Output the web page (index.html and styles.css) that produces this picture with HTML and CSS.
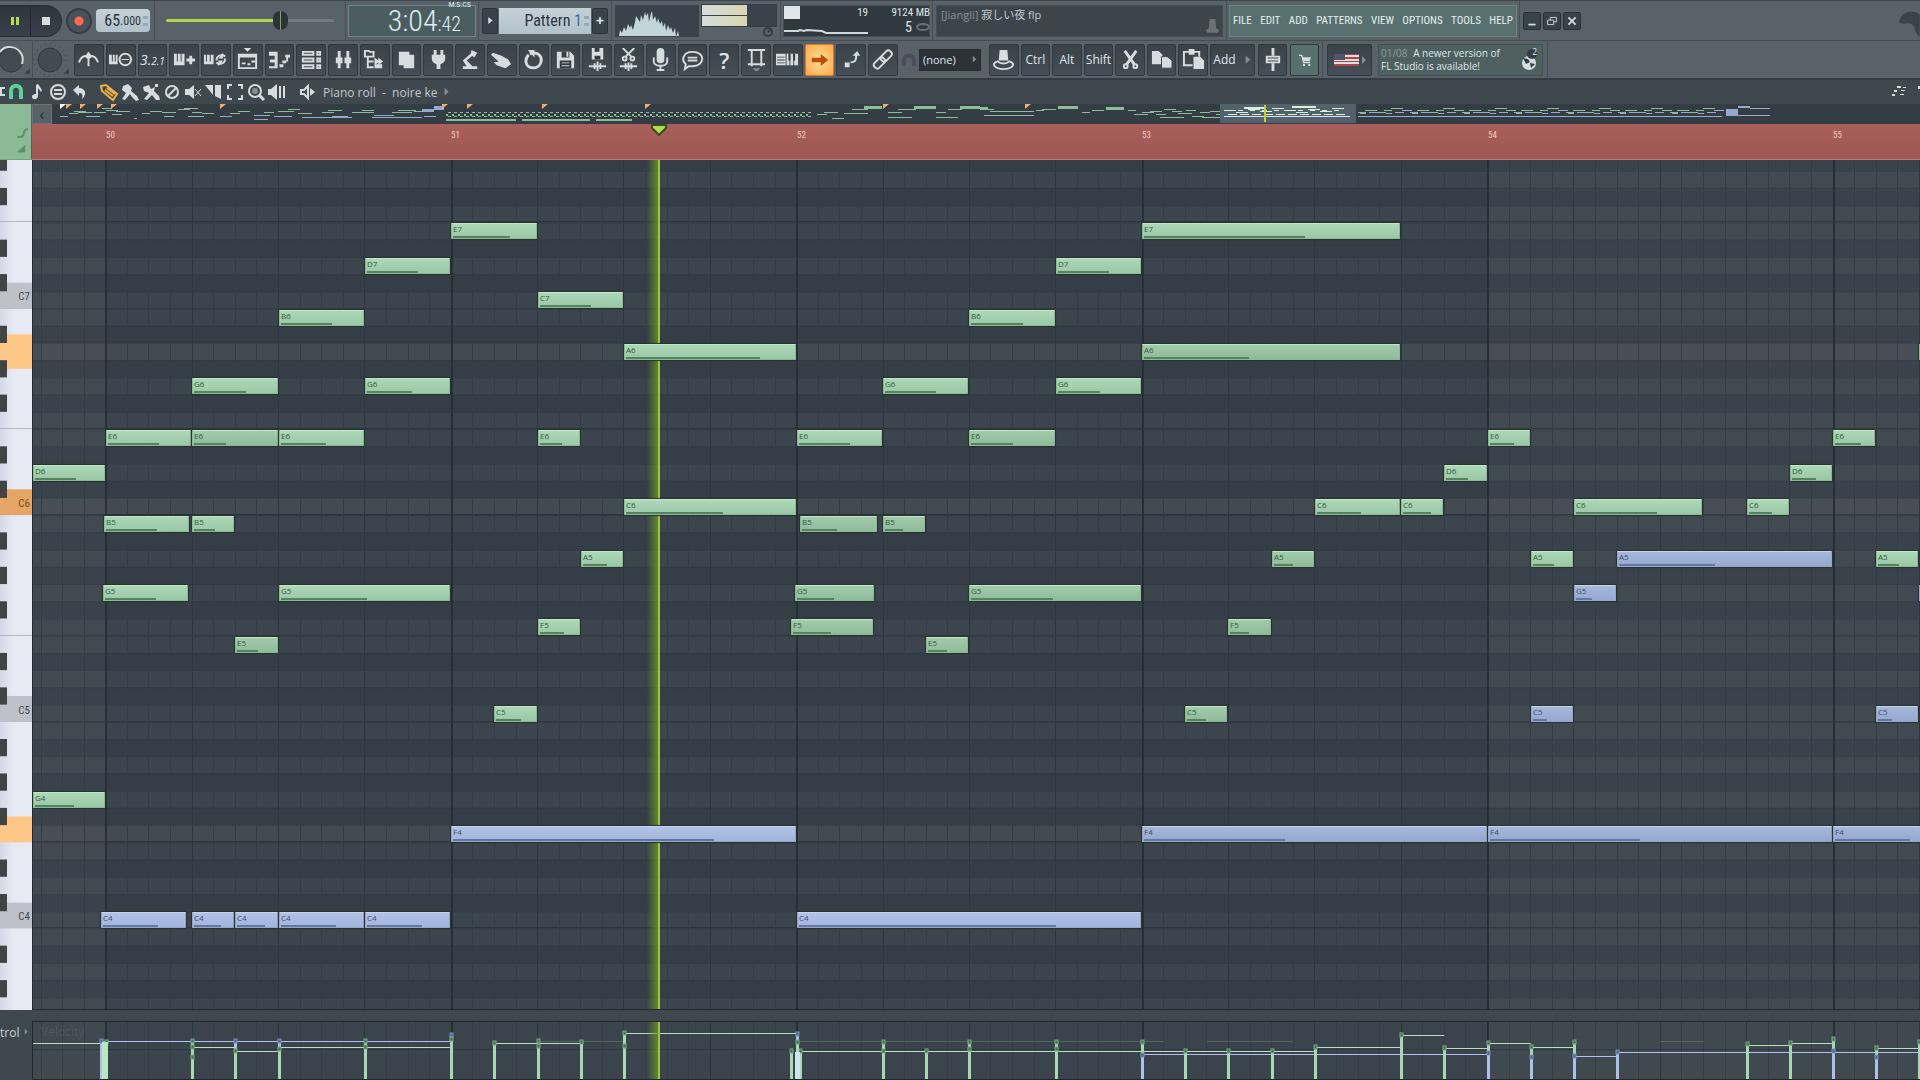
FILE: index.html
```html
<!DOCTYPE html>
<html lang="en">
<head>
<meta charset="UTF-8">
<meta name="viewport" content="width=device-width, initial-scale=1.0">
<title>Piano roll - noire ke</title>
<link rel="stylesheet" href="styles.css">
</head>
<body>
<header>
    <div class="bar top-bar">
        <div class="group transport-group">
            <div class="transport">
                <button aria-label="Pause"><svg viewBox="0 0 24 24"><path class="lime" d="M8 8h3v8H8zM13 8h3v8h-3z"/></svg></button>
                <button aria-label="Stop"><svg viewBox="0 0 24 24"><path d="M8 8h8v8H8z"/></svg></button>
            </div>
            <button class="record" aria-label="Record"></button>
            <label class="lcd tempo"><input type="text" value="65" aria-label="Tempo"><small>.000</small><i class="spin"></i></label>
        </div>
        <div class="group slider-group"><input type="range" min="0" max="100" value="70" aria-label="Song position"></div>
        <div class="group"><div class="screen time"><b>3:04</b><span><small>M:S:CS</small>:42</span></div></div>
        <div class="group pattern-group">
            <button class="slim" aria-label="Pattern menu"><svg viewBox="0 0 16 24"><path d="M6 8l5 4-5 4z"/></svg></button>
            <button class="lcd pattern">Pattern <em>1</em><i class="spin"></i></button>
            <button class="slim" aria-label="Add pattern"><svg viewBox="0 0 16 24"><path class="line" d="M4 12h8M8 8v8"/></svg></button>
        </div>
        <div class="group scope-group">
            <svg class="spectrum" viewBox="0 0 84 32"><path d="M4 31l1-6 2 3 2-6 2 4 2-7 2 4 1-3 2 5 2-8 1-6 2 3 2 3 1-7 2 5 2-8 1 4 2-3 1 9 2-9 1-2 1 9 2-4 2 7 1-5 2 6 2-3 1 6 2-4 1 8 2-6 2 5 1-3 2 6 2-5 1 9 2-6 1 5h-2z"/></svg>
            <div class="scope-side">
                <div class="meter"><i></i><i></i></div>
                <svg viewBox="0 0 12 10"><circle cx="6" cy="5" r="4"/><path d="M6 5l3-3"/></svg>
            </div>
        </div>
        <div class="group">
            <div class="screen cpu">
                <i></i><span>19</span><span>9124 MB</span>
                <svg viewBox="0 0 84 16"><path d="M0 12h14l2-1 4 1 3-1 15 1 4 2h42"/></svg><span class="voices">5<svg viewBox="0 0 14 10"><ellipse cx="7" cy="5" rx="6" ry="3"/></svg></span>
            </div>
        </div>
        <div class="group hint-group">
            <div class="screen hint"><span>[Jiangli]</span> 寂しい夜 flp<svg viewBox="0 0 14 16"><path d="M4 1h6l1 10 3 2-1 3H1l-1-3 3-2z"/></svg></div>
        </div>
        <div class="group">
            <nav class="menu">
                <a href="#">FILE</a><a href="#">EDIT</a><a href="#">ADD</a><a href="#">PATTERNS</a><a href="#">VIEW</a><a href="#">OPTIONS</a><a href="#">TOOLS</a><a href="#">HELP</a>
            </nav>
        </div>
        <div class="window-buttons">
            <button aria-label="Minimize"><svg viewBox="0 0 18 18"><path class="line" d="M5 13h8"/></svg></button>
            <button aria-label="Restore"><svg viewBox="0 0 18 18"><path class="line thin" d="M7 8V5h7v5h-3M4 8h7v5H4z"/></svg></button>
            <button aria-label="Close"><svg viewBox="0 0 18 18"><path class="line" d="M5 5l8 8M13 5l-8 8"/></svg></button>
        </div>
        <svg class="logo" viewBox="0 0 22 40"><path d="M1 22c0-6 6-12 14-11 3 0 5 1 7 3v23c-5-3-4-9-7-12-3-4-9 0-14-3z"/></svg>
    </div>

    <div class="bar tool-bar">
        <div class="group knob-group"><svg viewBox="0 0 32 38"><circle cx="11" cy="19" r="12" class="knob"/><path class="line" d="M0 11c5-8 18-6 22 3 1 3 1 6 0 9"/><path class="corner" d="M24 33l6-6v6z"/></svg></div>
        <div class="knob-group wide"><svg viewBox="0 0 41 38"><circle cx="17" cy="19" r="16" class="ticks"/><circle cx="17" cy="19" r="12" class="knob"/><path class="corner" d="M30 33l6-6v6z"/></svg></div>
        <div class="tools">
            <button aria-label="Metronome"><svg viewBox="0 0 24 24"><path class="line" d="M2 15c2-6 5-7 10-7s8 1 10 7M12 5v14"/><path d="M12 4l4 5-4 3-4-3z"/></svg></button>
            <button aria-label="Wait for input"><svg viewBox="0 0 24 24"><path d="M0 7h3v7h1V7h2v7h1V7h2v10H0z"/><circle class="line" cx="17" cy="12" r="6"/><path class="line thin" d="M13 12h8"/></svg></button>
            <button aria-label="Countdown"><span>3.<small>2.1</small></span></button>
            <button aria-label="Blend recording"><svg viewBox="0 0 24 24"><path d="M1 6h3v8h1V6h3v8h1V6h3v12H1zM14 11h3V8h3v3h3v3h-3v3h-3v-3h-3z"/></svg></button>
            <button aria-label="Loop recording"><svg viewBox="0 0 24 24"><path d="M0 7h2v7h1V7h3v7h1V7h3v10H0z"/><path class="line" d="M13 13c0-6 7-7 9-4M22 11c0 6-7 7-9 4"/><path d="M20 5v6h-5zM15 19v-6h5z"/></svg></button>
            <button aria-label="Playlist"><svg viewBox="0 0 24 24"><path d="M8 0h8l-4 4z"/><path class="line" d="M3 7h18v14H3z"/><path d="M3 7h18v3H3zM6 15h4v2H6zM12 16h3v2h-3zM16 13h4v2h-4z"/></svg></button>
            <button aria-label="Piano roll"><svg viewBox="0 0 24 24"><path d="M1 4h9v17H1v-2h6v-4H2v-3h5V8H1zM12 17h4v3h-4zM15 13h4v3h-4zM18 7h5v3h-5zM19 10h2v4h-2z"/></svg></button>
            <button aria-label="Channel rack"><svg viewBox="0 0 24 24"><path class="line" d="M3 4h11v3H3zM3 11h11v3H3zM3 18h11v3H3zM18 4h3v3h-3zM18 11h3v3h-3zM18 18h3v3h-3z"/></svg></button>
            <button aria-label="Mixer"><svg viewBox="0 0 24 24"><path d="M6 3h3v18H6zM15 3h3v18h-3zM4 10h7v6H4zM13 10h7v6h-7z"/></svg></button>
            <button aria-label="Browser"><svg viewBox="0 0 24 24"><path class="line" d="M2 3h4l1 1h4v5H2zM5 10v10h6M5 14h6"/><path d="M12 10l4 3V10l5 4-5 4v-3l-4 3zM12 17h8v4h-8z"/></svg></button>
            <button aria-label="Plugin"><svg viewBox="0 0 24 24"><path d="M4 4h11v3h5v14H9v-3H4z"/></svg></button>
            <button aria-label="Plug"><svg viewBox="0 0 24 24"><path d="M7 2h3v5h4V2h3v5h2v4c0 4-3 5-5 6v5h-4v-5c-2-1-5-2-5-6V7h2z"/></svg></button>
            <button aria-label="Tempo tapper"><svg viewBox="0 0 24 24"><path d="M13 2l6 3-3 5-4-3zM12 6l2 2-6 5 6 6h5v3H4v-3h4l-4-6z"/></svg></button>
            <button aria-label="Touch"><svg viewBox="0 0 24 24"><path d="M3 5l9 3 7 4 3 5-6 4-9-3-3-3 5-1-8-7z"/></svg></button>
            <button aria-label="Undo"><svg viewBox="0 0 24 24"><path class="line heavy" d="M8 6c9-3 13 3 12 8-2 9-15 9-16 0 0-3 1-5 3-7"/><path d="M6 2h7v8z"/></svg></button>
            <button aria-label="Save"><svg viewBox="0 0 24 24"><path d="M3 4h14l4 4v13H3z"/><path class="hole" d="M8 4h8v6H8zM6 13h12v8H6z"/><path d="M13 4h2v5h-2zM8 15h8v1H8zM8 18h8v1H8z"/></svg></button>
            <button aria-label="Save new version"><svg viewBox="0 0 24 24"><path d="M6 0h12v12H6z"/><path class="hole" d="M9 0h5v4H9zM9 8h6v4H9z"/><path class="line" d="M3 19h18M9 16v6M12 14v10M15 16v6"/></svg></button>
            <button aria-label="Render"><svg viewBox="0 0 24 24"><path class="line" d="M6 0l9 9M18 0L9 9"/><circle class="line" cx="8" cy="11" r="2"/><circle class="line" cx="16" cy="11" r="2"/><path class="line" d="M3 19h18M9 16v6M12 15v9M15 16v6"/></svg></button>
            <button aria-label="Record audio"><svg viewBox="0 0 24 24"><rect x="8" y="0" width="8" height="16" rx="4"/><path class="line" d="M5 10v4c0 6 14 6 14 0v-4M12 18v5M8 23h8"/></svg></button>
            <button aria-label="Chat"><svg viewBox="0 0 24 24"><path class="line" d="M12 4c14 0 13 15 0 15-2 0-3 0-4 0l-4 3 1-5C0 13 2 4 12 4zM7 10h10M7 13h10"/></svg></button>
            <button aria-label="Help"><span class="big">?</span></button>
            <button aria-label="Film"><svg viewBox="0 0 24 24"><path class="line" d="M7 1v18M17 1v18M3 2h18M3 17h18"/><path class="dim" d="M8 21h8l-4 4z"/></svg></button>
            <button aria-label="Typing keyboard"><svg viewBox="0 0 24 24"><path d="M0 6h10v12H0zM11 6h3v12h-3zM15 6h3v12h-3zM19 6h4v12h-4z"/><path class="hole" d="M1 9h8v1H1zM1 12h8v1H1zM1 15h8v1H1zM13 6h2v7h-2zM18 6h2v7h-2z"/></svg></button>
            <button class="active" aria-label="Step edit"><svg viewBox="0 0 24 24"><path d="M1 9h12V4l10 8-10 8v-5H1z"/></svg></button>
            <button aria-label="Note glide"><svg viewBox="0 0 24 24"><path class="line" d="M11 15c5 0 6-2 6-8"/><path d="M13 8l5-5 3 5zM5 15h5v5H5z"/></svg></button>
            <button aria-label="Link"><svg viewBox="0 0 24 24"><g class="line" transform="rotate(-45 12 12)"><rect x="0" y="8" width="13" height="7" rx="3"/><rect x="10" y="8" width="13" height="7" rx="3"/></g></svg></button>
        </div>
        <svg class="snap" viewBox="0 0 21 24"><path d="M6 18v-6c0-6 10-6 10 0v6"/></svg>
        <label class="snap-box"><select aria-label="Snap"><option>(none)</option></select><svg viewBox="0 0 6 10"><path class="dim" d="M1 1l4 4-4 4z"/></svg></label>
        <div class="tools edit-tools">
            <button aria-label="Hat"><svg viewBox="0 0 24 24"><path d="M8 2h8l1 11H7z"/><path class="line" d="M6 14c-8 2-3 8 6 8s14-6 6-8c-3 3-9 3-12 0z"/></svg></button>
            <button>Ctrl</button>
            <button>Alt</button>
            <button>Shift</button>
            <button aria-label="Cut"><svg viewBox="0 0 24 24"><path class="line heavy" d="M6 3l10 14M18 3L8 17"/><circle class="line" cx="7" cy="19" r="2"/><circle class="line" cx="17" cy="19" r="2"/></svg></button>
            <button aria-label="Copy"><svg viewBox="0 0 24 24"><path d="M2 3h7l4 4v10H2z"/><path d="M12 9h6l5 4v8H12z" class="front"/></svg></button>
            <button aria-label="Paste"><svg viewBox="0 0 24 24"><path class="line" d="M11 18H2V4h16v5"/><path d="M7 1h6v6H7zM12 9h7l4 4v9H12z"/></svg></button>
        </div>
        <div class="tool-tail">
            <button class="add">Add<svg viewBox="0 0 10 12"><path class="dim" d="M2 1l6 5-6 5z"/></svg></button>
            <button aria-label="Fader"><svg viewBox="0 0 24 24"><path d="M11 0h3v8h-3zM11 16h3v8h-3z"/><path class="line" d="M6 9h13v6H6zM6 12h13"/></svg></button>
            <button class="shop" aria-label="Shop"><svg viewBox="0 0 24 24"><path class="line" d="M3 5h4l3 11h10"/><path d="M8 8h13l-2 6H10zM9 18h3v3H9zM17 18h3v3h-3z"/></svg></button>
        </div>
        <div class="news-group">
            <button aria-label="Language"><svg class="flag" viewBox="0 0 32 14"><path class="white" d="M0 1h25v12H0z"/><path class="red" d="M0 1h25v1H0zM0 4h25v2H0zM0 8h25v1H0zM0 11h25v2H0z"/><path class="navy" d="M0 1h11v6H0z"/><path class="dim" d="M28 3l4 4-4 4z"/></svg></button>
            <div class="news"><p><time>01/08</time> A newer version of<br>FL Studio is available!</p><svg viewBox="0 0 20 24"><circle cx="9" cy="15" r="7"/><path class="hole" d="M3 10l5 1 2 3-4 2zM10 15l5 1-4 4z"/><circle class="hole" cx="12" cy="6" r="5"/></svg><sup>2</sup></div>
        </div>
    </div>

    <div class="bar roll-bar">
        <div class="roll-tools">
            <button aria-label="Options"><svg viewBox="0 0 20 20"><path class="line" d="M20 6h-4v7h4"/></svg></button>
            <button aria-label="Snap"><svg viewBox="0 0 20 20"><path class="magnet" d="M5 17V9c0-7 10-7 10 0v8"/></svg></button>
            <button aria-label="Stamp"><svg viewBox="0 0 20 20"><path d="M9 3l2-1 4 6-1 2-3-4v8c0 4-6 4-6 1s3-3 4-3z"/></svg></button>
            <button aria-label="Quantize"><svg viewBox="0 0 20 20"><circle class="line" cx="10" cy="10" r="7"/><path class="line" d="M6 8h8M6 12h8"/></svg></button>
            <button aria-label="Undo"><svg viewBox="0 0 20 20"><path d="M4 8l6-5v3c7 0 8 7 3 11 1-5 0-6-3-6v3z"/></svg></button>
        </div>
        <div class="roll-tools">
            <button aria-label="Draw"><svg viewBox="0 0 20 20"><path class="gold" d="M2 4l5-1 11 9-4 6-11-9zM6 8l8 6M8 6l8 6"/></svg></button>
            <button aria-label="Paint"><svg viewBox="0 0 20 20"><path d="M3 4l5-2 4 4-1 3 6 5 2 4-3 1-4-4-2-3-5 6-3-1 4-6-4-3z"/></svg></button>
            <button aria-label="Paint drums"><svg viewBox="0 0 20 20"><path d="M2 5l6-2 2 4 4-2-1 4 5 5 1 4-4 0-4-5-5 5-3-1 5-6-5-2zM14 2h3v3h-3z"/></svg></button>
            <button aria-label="Delete"><svg viewBox="0 0 20 20"><circle class="line" cx="10" cy="10" r="6"/><path class="line" d="M6 14l8-8"/></svg></button>
            <button aria-label="Mute"><svg viewBox="0 0 20 20"><path d="M2 7h4l5-4v14l-5-4H2z"/><path class="line thin" d="M12 7l6 7M18 7l-6 7"/></svg></button>
            <button aria-label="Slice"><svg viewBox="0 0 20 20"><path d="M1 3h8v10zM11 3h6v14l-6-3z"/></svg></button>
            <button aria-label="Select"><svg viewBox="0 0 20 20"><path class="line" d="M3 7V3h4M13 3h4v4M17 13v4h-4M7 17H3v-4"/></svg></button>
            <button aria-label="Zoom"><svg viewBox="0 0 20 20"><circle class="line" cx="9" cy="9" r="6"/><circle class="dim" cx="9" cy="9" r="3"/><path class="line heavy" d="M13 13l5 5"/></svg></button>
            <button aria-label="Playback"><svg viewBox="0 0 20 20"><path d="M1 7h3l6-5v16l-6-5H1zM12 4h2v12h-2zM16 4h2v12h-2z"/></svg></button>
        </div>
        <button class="target"><svg viewBox="0 0 20 20"><path class="line" d="M3 8h3l4-4v12l-4-4H3z"/><path d="M12 6l5 4-5 4z"/></svg>Piano roll&nbsp; - &nbsp;noire ke<svg class="arrow" viewBox="0 0 10 12"><path class="dim" d="M2 1l5 5-5 5z"/></svg></button>
        <svg class="roll-right" viewBox="0 0 30 20"><path d="M7 4h4v2H7zM13 5h3v1h-3zM4 8h3v2H4zM11 8h4v1h-4zM2 12h3v2H2zM10 12h4v1h-4zM28 4h2v3h-2z"/></svg>
    </div>
</header>

<main class="roll">
    <div class="corner-box"><svg viewBox="0 0 32 56"><path class="curve" d="M18 34h4c4 0 1-8 6-8h1"/><path d="M17 50l9-8v8z"/></svg></div>
    <div class="timeline">
        <div class="overview"><button aria-label="Scroll left">‹</button><svg id="overview"></svg></div>
        <div class="ruler" id="ruler"></div>
    </div>
    <svg class="keys" id="keys"></svg>
    <div class="grid-area">
        <svg id="grid"></svg>
        <div class="playhead"></div>
        <div id="notes"></div>
    </div>
    <div class="splitter"></div>
    <div class="control-label">trol <svg viewBox="0 0 6 10"><path class="dim" d="M1 1l4 4-4 4z"/></svg></div>
    <div class="velocity">
        <svg id="velocity"></svg>
        <span>Velocity</span>
        <div class="playhead"></div>
    </div>
</main>
<script src="script.js"></script>
</body>
</html>
```
FILE: styles.css
```css
* {
    box-sizing: border-box;
}
body {
    margin: 0;
    height: 100vh;
    display: flex;
    flex-direction: column;
    overflow: hidden;
    background: #3f484f;
    color: #dfe6ea;
    font-family: "Open Sans", "Noto Sans CJK JP", sans-serif;
    font-size: 12px;
}
button, input, select {
    font: inherit;
    color: inherit;
    border: 0;
    margin: 0;
    padding: 0;
    background: none;
}
svg {
    display: block;
    fill: #d5dde1;
}
.line {
    fill: none;
    stroke: #d5dde1;
    stroke-width: 2;
}
.thin {
    stroke-width: 1;
}
.heavy {
    stroke-width: 3;
}
.hole {
    fill: #343d44;
}
.dim {
    fill: #848d93;
}
.lime {
    fill: #b4dc4c;
}

/* toolbars */
.bar {
    display: flex;
    align-items: center;
    background: #5a6269;
}
.top-bar {
    height: 41px;
    border-top: 1px solid #3d464d;
    border-bottom: 1px solid #444d54;
}
.tool-bar {
    height: 39px;
    border-bottom: 2px solid #333c43;
}
.group {
    display: flex;
    align-items: center;
    height: 100%;
    padding: 0 2px;
    border-right: 1px solid #474f56;
}
.transport-group {
    gap: 4px;
    padding: 0 4px 0 0;
}
.transport {
    display: flex;
    width: 62px;
    height: 32px;
    border-radius: 0 16px 16px 0;
    background: linear-gradient(#2d363d, #39424a);
    border: 1px solid #272f35;
    border-left: 0;
}
.transport button {
    flex: 1;
    border-right: 1px solid #232b31;
}
.transport button + button {
    border: 0;
}
.transport svg {
    width: 24px;
    margin: auto;
}
.record {
    width: 26px;
    height: 26px;
    border-radius: 50%;
    border: 2px solid #343c43;
    background: radial-gradient(circle, #ff6b4e 4px, #4a5259 5px);
}
.lcd {
    display: flex;
    align-items: center;
    justify-content: flex-end;
    background: linear-gradient(#c3d1d8, #b2c2ca);
    color: #2c353c;
    font-family: "Roboto Condensed", Roboto, sans-serif;
    font-size: 16px;
}
.tempo {
    width: 54px;
    height: 23px;
    border-radius: 4px;
    padding-right: 2px;
}
.tempo input {
    width: 20px;
    text-align: right;
}
.tempo small {
    font-size: 12px;
}
.spin {
    width: 5px;
    height: 10px;
    margin-left: 2px;
    border-top: 3px solid #9aaab5;
    border-bottom: 3px solid #9aaab5;
}
.slider-group {
    padding: 0 11px;
}
input[type="range"] {
    appearance: none;
    width: 168px;
    height: 20px;
}
input[type="range"]::-webkit-slider-runnable-track {
    height: 3px;
    border-radius: 2px;
    background: linear-gradient(90deg, #acd451 70%, #737b81 70%);
}
input[type="range"]::-webkit-slider-thumb {
    appearance: none;
    width: 15px;
    height: 19px;
    margin-top: -8px;
    border-radius: 8px;
    background: linear-gradient(90deg, #2b3338 46%, #8aa83f 46%, #8aa83f 56%, #2b3338 56%);
}
.screen {
    height: 32px;
    background: #3c454c;
    border: 1px solid #454e55;
}
.time {
    display: flex;
    align-items: center;
    justify-content: flex-end;
    width: 128px;
    padding-right: 14px;
    background: #4b5d61;
    border-color: #71838a;
    color: #deedf0;
    font-family: "Roboto Condensed", Roboto, sans-serif;
    font-size: 30px;
    line-height: 30px;
}
.time b {
    font-weight: 300;
}
.time span {
    position: relative;
    font-size: 20px;
    font-weight: 300;
    padding-top: 6px;
}
.time small {
    position: absolute;
    right: -10px;
    top: -3px;
    font-size: 8px;
    font-weight: 400;
    line-height: 10px;
}
.pattern-group {
    gap: 1px;
    padding: 0 3px;
}
.slim {
    width: 16px;
    height: 26px;
    background: #39424a;
    border: 1px solid #2b343b;
    border-radius: 2px;
}
.slim svg {
    width: 14px;
}
.pattern {
    width: 92px;
    height: 26px;
    padding-right: 2px;
    white-space: pre;
}
.pattern em {
    font-style: normal;
    color: #3e66a5;
}
.scope-group {
    gap: 2px;
    padding: 0 3px;
}
.spectrum {
    width: 84px;
    height: 32px;
    background: #3a434b;
    fill: #c4d5d9;
}
.meter {
    width: 76px;
    height: 23px;
    background: #3a434b;
    border: 1px solid #343d44;
}
.meter i {
    display: block;
    width: 45px;
    height: 10px;
    margin-bottom: 1px;
    background: linear-gradient(90deg, #d6dcdc, #dad5b1);
}
.scope-side svg {
    width: 12px;
    margin: 0 3px 0 auto;
    fill: none;
    stroke: #353e45;
    stroke-width: 2;
}
.cpu {
    display: grid;
    grid-template-columns: 16px 1fr 62px;
    grid-template-rows: 13px 17px;
    width: 147px;
    background: #30393f;
    font-family: "Roboto Condensed", Roboto, sans-serif;
    font-size: 11px;
    line-height: 14px;
    text-align: right;
}
.cpu i {
    background: #dfe5e8;
}
.cpu svg {
    grid-column: 1 / 3;
    width: 84px;
    height: 16px;
    fill: none;
    stroke: #cfd8dc;
    stroke-width: 2;
}
.cpu .voices {
    display: flex;
    align-items: center;
    justify-content: flex-end;
    gap: 4px;
    font-size: 14px;
}
.cpu .voices svg {
    width: 14px;
    height: 10px;
    stroke: #69727a;
}
.hint-group {
    padding: 0 3px;
}
.hint {
    position: relative;
    width: 287px;
    padding: 0 4px;
    font-size: 11px;
    line-height: 18px;
    color: #c3cacd;
}
.hint span {
    color: #8a9297;
}
.hint svg {
    position: absolute;
    right: 3px;
    bottom: 3px;
    width: 13px;
    fill: #6a7278;
}
.menu {
    display: flex;
    align-items: center;
    justify-content: space-between;
    width: 288px;
    height: 32px;
    padding: 0 3px;
    background: #58706f;
    border: 1px solid #6c8283;
    font-family: "Roboto Condensed", Roboto, sans-serif;
    font-size: 11px;
}
.menu a {
    color: #e5eff0;
    text-decoration: none;
}
.window-buttons {
    display: flex;
    gap: 2px;
    margin-left: 3px;
}
.window-buttons button {
    width: 18px;
    height: 18px;
    background: #39424a;
    border: 1px solid #293238;
    border-radius: 2px;
}
.window-buttons svg {
    width: 16px;
}
.logo {
    width: 22px;
    height: 39px;
    margin-left: auto;
    fill: #3b444b;
}
.knob-group {
    width: 33px;
    padding: 0;
}
.knob-group.wide {
    width: 41px;
}
.knob-group svg {
    width: 100%;
}
.knob {
    fill: #434b52;
    stroke: #31393f;
}
.ticks {
    fill: none;
    stroke: #4a5259;
    stroke-width: 2;
    stroke-dasharray: 1 4;
}
.corner {
    fill: #3b444b;
}
.tools {
    display: grid;
    grid-template-columns: repeat(26, 1fr);
    gap: 2px;
    width: 824px;
}
.edit-tools {
    grid-template-columns: repeat(7, 1fr);
    width: 219px;
    margin-left: 8px;
}
.tools button, .tool-tail button, .news-group button {
    display: flex;
    align-items: center;
    justify-content: center;
    height: 32px;
    background: linear-gradient(#3a434a, #454e56);
    border: 1px solid #303940;
    border-radius: 2px;
}
.tools svg, .tool-tail svg {
    width: 23px;
}
.tools span {
    font-size: 14px;
    font-style: italic;
}
.tools small {
    font-size: 10px;
}
.tools .big {
    font-size: 22px;
    font-style: normal;
    font-weight: 600;
    line-height: 22px;
}
.tools .active {
    background: radial-gradient(#ffe09a, #ffa548);
    border-color: #d97b2b;
}
.tools .active svg {
    width: 18px;
    fill: #bb4f08;
}
.snap {
    width: 21px;
    fill: none;
    stroke: #484f56;
    stroke-width: 4;
}
.snap-box {
    display: flex;
    align-items: center;
    width: 62px;
    height: 22px;
    padding: 0 3px;
    background: #2c3238;
    border: 1px solid #272e33;
    font-size: 11px;
}
.snap-box select {
    appearance: none;
    flex: 1;
}
.snap-box svg {
    width: 5px;
}
.front {
    stroke: #3b444b;
}
.tool-tail {
    display: flex;
    gap: 3px;
    height: 100%;
    align-items: center;
    padding: 0 3px 0 2px;
    border-right: 1px solid #474f56;
}
.tool-tail button {
    width: 29px;
}
.tool-tail .add {
    width: 45px;
    gap: 8px;
}
.tool-tail .add svg {
    width: 8px;
}
.tool-tail .shop {
    background: #56706d;
}
.tool-tail .shop svg {
    width: 16px;
}
.news-group {
    display: flex;
    gap: 6px;
    height: 100%;
    align-items: center;
    padding: 0 4px;
    border-right: 1px solid #474f56;
}
.news-group button {
    width: 45px;
}
.flag {
    width: 32px;
}
.white {
    fill: #dedede;
}
.red {
    fill: #a9474c;
}
.navy {
    fill: #54536d;
}
.news {
    position: relative;
    display: flex;
    align-items: center;
    justify-content: space-between;
    width: 165px;
    height: 32px;
    padding: 0 2px;
    background: #4e605f;
    border: 1px solid #3f5152;
    font-size: 10px;
    line-height: 13px;
}
.news p {
    margin: 0;
    white-space: nowrap;
}
.news time {
    margin-right: 3px;
    color: #8b9b9a;
}
.news svg {
    width: 20px;
}
.news sup {
    position: absolute;
    right: 5px;
    top: 0;
}
.roll-bar {
    height: 24px;
    gap: 20px;
    background: #3f484f;
}
.roll-tools {
    display: flex;
    gap: 1px;
}
.roll-tools:first-child {
    margin-left: -15px;
}
.roll-tools svg, .target svg {
    width: 20px;
}
.roll-bar .roll-tools + .roll-tools {
    margin-left: -10px;
}
.magnet {
    fill: none;
    stroke: #5fcf9d;
    stroke-width: 4;
}
.gold {
    fill: none;
    stroke: #eeb243;
    stroke-width: 2;
}
.target {
    display: flex;
    align-items: center;
    margin-left: -9px;
    gap: 5px;
    color: #c2c9cc;
}
.target .arrow {
    width: 8px;
}
.roll-right {
    width: 30px;
    margin-left: auto;
}

/* piano roll */
.roll {
    flex: 1;
    display: grid;
    grid-template-columns: 32px 1fr;
    grid-template-rows: 56px 1fr 11px 59px;
    min-height: 0;
}
.corner-box {
    background: #8dba96;
    border-right: 1px solid #4d6552;
    border-bottom: 1px solid #78a181;
}
.corner-box path {
    fill: #638b6b;
}
.corner-box .curve {
    fill: none;
    stroke: #638b6b;
    stroke-width: 2;
}
.timeline {
    min-width: 0;
}
.overview {
    display: flex;
    height: 20px;
    background: #343d44;
}
.overview button {
    width: 20px;
    background: #596168;
    border: 1px solid #6b7379;
    color: #20282d;
    font-size: 16px;
    line-height: 14px;
}
.overview svg {
    flex: 1;
    height: 20px;
}
.ruler {
    position: relative;
    height: 36px;
    overflow: hidden;
    background: linear-gradient(#a9605c, #9d5753);
    border-bottom: 1px solid #bd7b73;
}
.ruler span {
    position: absolute;
    top: 5px;
    font-family: "Roboto Condensed", Roboto, sans-serif;
    font-size: 9px;
    line-height: 12px;
    color: #f2c9c3;
}
.marker {
    position: absolute;
    top: 0;
    width: 16px;
    height: 12px;
    fill: #a9e04a;
    stroke: #3e4821;
    stroke-width: 2;
}
.keys {
    width: 32px;
    height: 100%;
    background: linear-gradient(90deg, #d6d9e5, #e6e8f2 40%, #e9ebf4);
    font-family: "Roboto Condensed", Roboto, sans-serif;
    font-size: 11px;
}
.grid-area {
    position: relative;
    overflow: hidden;
    min-width: 0;
    border-left: 1px solid #242c32;
    border-bottom: 1px solid #20282e;
}
.grid-area svg, .velocity svg {
    width: 100%;
    height: 100%;
}
.note {
    position: absolute;
    height: 16px;
    overflow: hidden;
    border: 1px solid #8bb896;
    border-top-color: #c3e5ca;
    border-radius: 1px;
    box-shadow: 0 0 1px 1px #28332f;
    background: linear-gradient(#acd8b7, #9ac7a5);
    color: #2f5a3b;
    font-size: 8px;
    line-height: 10px;
    padding-left: 1px;
}
.note.soft {
    background: linear-gradient(#a0ccab, #90bb9b);
}
.note i {
    position: absolute;
    left: 1px;
    bottom: 0;
    height: 2px;
    background: #55835f;
}
.note.blue {
    border-color: #95a6cb;
    border-top-color: #c6d4f2;
    background: linear-gradient(#b2c2e6, #a2b4dc);
    color: #454b66;
}
.note.blue.soft {
    background: linear-gradient(#a6b7dc, #96a8cf);
}
.note.blue i {
    background: #6278a2;
}
.playhead {
    position: absolute;
    top: 0;
    bottom: 0;
    left: 614px;
    width: 13px;
    background: linear-gradient(90deg, #6d982000, #6d9820cc);
    border-right: 2px solid #98c543;
}
.splitter {
    grid-column: 1 / 3;
    background: #3f484f;
}
.control-label {
    display: flex;
    align-items: center;
    justify-content: flex-end;
    gap: 5px;
    height: 22px;
    padding-right: 3px;
    color: #c8d0d3;
}
.control-label svg {
    width: 5px;
}
.velocity {
    position: relative;
    overflow: hidden;
    min-width: 0;
    background: #3b444c;
    border: 1px solid #20282e;
    border-right: 0;
}
.velocity span {
    position: absolute;
    left: 8px;
    top: 1px;
    color: #4e575e;
}
```
FILE: script.js
```javascript
var ROW = 17.22;
var STEP = 21.59;
var BAR_50 = 72.8;
var C7_TOP = 131.3;
var NAMES = ['C', 'C#', 'D', 'D#', 'E', 'F', 'F#', 'G', 'G#', 'A', 'A#', 'B'];

// pitch, start step, length in steps, velocity, blue
var notes = [
    ['D6', -3.36, 3.36, .58], ['G4', -3.36, 3.36, .56],
    ['E6', 0, 4, .62], ['E6', 4, 4, .38], ['E6', 8, 4, .54],
    ['B5', -.1, 4, .61], ['B5', 4, 2, .52], ['G5', -.15, 4, .62], ['G5', 8, 8, .51],
    ['G6', 4, 4, .62], ['G6', 12, 4, .54], ['B6', 8, 4, .62], ['D7', 12, 4, .62], ['E5', 6, 2, .5],
    ['C4', -.22, 4, .66, 1], ['C4', 4, 2, .68, 1], ['C4', 6, 2, .68, 1], ['C4', 8, 4, .66, 1], ['C4', 12, 4, .66, 1],
    ['E7', 16, 4, .68], ['C7', 20, 4, .62], ['A6', 24, 8, .79], ['E6', 20, 2, .55], ['C6', 24, 8, .57],
    ['A5', 22, 2, .6], ['F5', 20, 2, .6], ['C5', 18, 2, .6], ['F4', 16, 16, .76, 1],
    ['E6', 32, 4, .62], ['B5', 32.15, 3.62, .47], ['B5', 36, 2, .45], ['G5', 31.92, 3.72, .48], ['F5', 31.74, 3.86, .47],
    ['G6', 36, 4, .62], ['B6', 40, 4, .62], ['E6', 40, 4, .5], ['D7', 44, 4, .62], ['G6', 44, 4, .51],
    ['G5', 40, 8, .48], ['E5', 38, 2, .48], ['C4', 32, 16, .75, 1],
    ['E7', 48, 12, .63], ['A6', 48, 12, .41], ['C5', 50, 2, .47], ['F5', 52, 2, .47], ['A5', 54, 2, .47],
    ['C6', 56, 4, .53], ['C6', 60, 2, .71], ['D6', 62, 2, .53], ['F4', 48, 16, .41, 1],
    ['E6', 64, 2, .6], ['A5', 66, 2, .52], ['C5', 66, 2, .36, 1], ['C6', 68, 6, .64], ['G5', 68, 2, .4, 1],
    ['A5', 70, 10, .45, 1], ['C6', 76, 2, .57], ['D6', 78, 2, .6], ['F4', 64, 16, .44, 1],
    ['E6', 80, 2, .66], ['A5', 82, 2, .52], ['C5', 82, 2, .36, 1], ['F4', 80, 8, .44, 1],
    ['A6', 84, 2, .5], ['G5', 84, 2, .4, 1]
];

function rowTop(pitch) {
    var name = pitch.slice(0, -1);
    var octave = parseInt(pitch.slice(-1), 10);
    return C7_TOP + ((7 - octave) * 12 - NAMES.indexOf(name)) * ROW;
}

function rect(x, y, w, h, fill) {
    return `<rect x="${x}" y="${y}" width="${w}" height="${h}" fill="${fill}"/>`;
}

function drawGrid() {
    var grid = '';
    var keys = '';
    var marked = { C6: '#e5a567', A6: '#fdc788', F4: '#fdc788' };
    for (var octave = 7; octave >= 3; octave--) {
        for (var i = 11; i >= 0; i--) {
            var pitch = NAMES[i] + octave;
            var y = rowTop(pitch);
            var black = pitch.indexOf('#') > 0;
            grid += rect(0, y, '100%', ROW, black ? '#353e47' : '#3c454d');
            grid += rect(0, y, '100%', 1, '#323b43');
            if (marked[pitch]) {
                grid += rect(0, y, '100%', ROW, '#ffffff08');
            }
            if (i === 0 || i === 5) {
                grid += rect(0, Math.round(y + ROW) - 1, '100%', 1, '#2d363d');
                keys += rect(0, Math.round(y + ROW) - 1, 32, 1, '#b4b6c0');
            }
            if (i === 0 || marked[pitch]) {
                var below = i === 9 ? ROW / 2 : 0;
                keys += rect(0, y - ROW / 2, 32, ROW * 1.5 + below, marked[pitch] || '#bfc1ca');
            }
            if (i === 0 && octave > 3) {
                keys += `<text x="30" y="${Math.round(y) + 9}" text-anchor="end" fill="${marked[pitch] ? '#7a4c1d' : '#454950'}">${pitch}</text>`;
            }
        }
    }
    for (octave = 7; octave >= 3; octave--) {
        [1, 3, 6, 8, 10].forEach(function(n) {
            keys += rect(0, rowTop(NAMES[n] + octave), 7, ROW, '#414345');
        });
    }
    document.getElementById('keys').innerHTML = keys;
    document.getElementById('grid').innerHTML = grid + verticals('100%');
}

function verticals(height) {
    var out = rect(0, 0, BAR_50, height, '#ffffff07') + rect(BAR_50 + 64 * STEP, 0, '100%', height, '#ffffff07');
    for (var s = -3; s < 110; s++) {
        var color = s % 16 === 0 ? '#262f36' : s % 4 === 0 ? '#2d373f' : '#343d45';
        out += rect(Math.floor(BAR_50 + s * STEP), 0, s % 16 === 0 ? 2 : 1, height, color);
    }
    return out;
}

function drawNotes() {
    document.getElementById('notes').innerHTML = notes.map(function(n) {
        var left = Math.round(BAR_50 + n[1] * STEP);
        var width = Math.round(BAR_50 + (n[1] + n[2]) * STEP) - left - 1;
        var cls = 'note' + (n[4] ? ' blue' : '') + (n[3] <= .5 ? ' soft' : '');
        var label = n[1] < 84 ? n[0] : '';
        return `<div class="${cls}" style="left:${left}px;top:${Math.round(rowTop(n[0])) + 1}px;width:${width}px">${label}<i style="width:${n[3] * 100}%"></i></div>`;
    }).join('');
}

function drawRuler() {
    var out = '';
    for (var bar = 0; bar < 6; bar++) {
        out += `<span style="left:${Math.round(BAR_50 + bar * 16 * STEP) + 1}px">${50 + bar}</span>`;
    }
    out += '<svg class="marker" style="left:619px" viewBox="0 0 16 12"><path d="M1 1h14v3l-7 7-7-7z"/></svg>';
    document.getElementById('ruler').innerHTML = out;
}

// step, handle heights above the bottom edge (blue ones negative)
var handles = [
    [-.22, -38], [0, 37], [4, 38, 32, 22], [6, -38, 28], [8, -38, 30], [12, 38, 32], [16, -44, 40],
    [18, 36], [20, 38, 33], [22, 37], [24, 46, 33], [31.74, 28], [32.15, 28], [32, -45, 37], [36, 37, 28], [38, 28],
    [40, 37, 30], [44, 37, 30], [48, 37, -24], [50, 28], [52, 28], [54, 28], [56, 32], [60, 44], [62, 31],
    [64, 36, -26], [66, 32, -22], [68, 37, -23], [70, -27], [76, 35], [78, 36], [80, 40, -28], [82, 31, -22], [84, 37]
];
// start step, end step, height, blue, faint
var levels = [
    [-4, -.2, 36], [-.2, 16, 38, 1], [4, 6, 32], [6, 8, 28], [8, 16, 32], [18, 22, 36], [20, 24, 38, 0, 1], [24, 32, 46],
    [32, 48, 28], [32, 49, 38, 0, 1], [48, 64, 25, 1], [48, 56, 28], [56, 60, 32], [60, 62, 44], [62, 64, 31], [51, 55, 38, 0, 1],
    [64, 66, 36], [66, 68, 32], [68, 70, 23, 1], [70, 84, 27, 1], [72, 74, 38, 0, 1], [76, 78, 34], [78, 80, 36], [82, 84, 31]
];

function drawVelocity() {
    var base = 57;
    var out = verticals('100%') + rect(0, 27, '100%', 1, '#303941');
    levels.forEach(function(l) {
        var x = BAR_50 + l[0] * STEP;
        var color = l[4] ? '#68826f88' : l[3] ? '#b1c2ec' : '#b6e1c0';
        out += rect(x, base - l[2], (l[1] - l[0]) * STEP, 1, color);
    });
    handles.forEach(function(h) {
        var x = Math.round(BAR_50 + h[0] * STEP);
        h.slice(1).sort(function(a, b) { return Math.abs(b) - Math.abs(a); }).forEach(function(v) {
            var y = base - Math.abs(v);
            out += rect(x - 1, y, 3, base, v < 0 ? '#aebfe8' : '#a9d7b4');
            out += `<rect x="${x - 1}" y="${y - 2}" width="3" height="4" fill="${v < 0 ? '#4d6590' : '#42724d'}" stroke="${v < 0 ? '#7c92bd' : '#77ab83'}"/>`;
        });
    });
    out += rect(69, 20, 6, 40, '#b9e6c3') + rect(762, 30, 5, 40, '#cde6ee');
    document.getElementById('velocity').innerHTML = out;
}

// miniature of the whole pattern, x counted from the left of the strip
var overviewLines = [
    [8, 12, 8], [17, 9, 9], [22, 7, 12], [26, 8, 14], [34, 12, 14], [42, 8, 12], [50, 4, 10], [54, 6, 12], [60, 10, 10], [64, 7, 14], [82, 14, 3], [90, 9, 8], [98, 7, 12],
    [110, 8, 14], [112, 12, 10], [126, 5, 12], [132, 4, 14], [140, 8, 10], [136, 12, 16], [150, 9, 12], [168, 12, 12], [178, 9, 10], [186, 7, 12],
    [202, 11, 16], [202, 15, 14], [212, 8, 10], [226, 7, 16], [222, 12, 18], [236, 5, 12], [246, 9, 14], [258, 13, 14], [270, 8, 12], [276, 6, 14], [280, 12, 16],
    [300, 8, 22], [310, 6, 12], [322, 11, 20], [340, 8, 20], [346, 6, 18], [362, 7, 20], [372, 12, 12],
    [780, 14, 12], [792, 9, 10], [800, 5, 16], [800, 9, 16], [812, 2, 18], [836, 8, 14], [846, 5, 18], [862, 2, 22], [836, 13, 24],
    [884, 8, 10], [896, 5, 14], [908, 2, 20], [884, 13, 22], [928, 3, 8], [934, 5, 8], [938, 7, 44], [932, 11, 50], [984, 6, 8], [990, 5, 14], [1006, 2, 20],
    [1030, 8, 8], [1040, 6, 12], [1054, 3, 18], [1076, 6, 8], [1082, 10, 14], [1090, 8, 12], [1098, 7, 12], [1104, 10, 10], [1112, 5, 12], [1120, 7, 10], [1126, 9, 14],
    [1134, 6, 10], [1140, 12, 12], [1108, 13, 24], [1148, 8, 10], [1158, 7, 12], [1164, 10, 20], [1150, 13, 30]
];
var flags = [8, 14, 28, 45, 59, 168, 390, 415, 490, 593, 831, 973];

function drawOverview() {
    var green = '#8ebb98';
    var blue = '#98a9ce';
    var out = '';
    overviewLines.forEach(function(l) {
        out += rect(l[0], l[1], l[2], l[1] < 4 ? 3 : 1, l[0] < 390 && l[1] > 10 ? blue : green);
    });
    for (var x = 394; x < 760; x += 6) {
        out += rect(x, 10, 2, 2, green) + rect(x + 2, 8, 3, 1, green) + rect(x + 2, 12, 3, 1, green);
    }
    out += rect(394, 15, 70, 2, green) + rect(470, 15, 68, 2, green) + rect(544, 15, 36, 2, green);
    out += rect(250, 13, 50, 1, blue) + rect(320, 13, 50, 1, blue);
    out += rect(370, 5, 12, 3, blue) + rect(382, 2, 10, 4, blue);
    out += rect(765, 10, 10, 1, green) + rect(772, 8, 14, 1, green);
    // visible part of the song
    out += rect(1168, 0, 136, 19, '#52616a');
    for (x = 1172; x < 1286; x += 12) {
        out += rect(x, 4 + x % 5, 12, 1, '#d5f2dd') + rect(x + 4, 8 + x % 3, 9, 1, '#d5f2dd') + rect(x + 2, 6, 5, 1, '#d5f2dd');
    }
    out += rect(1192, 3, 20, 2, '#d5f2dd') + rect(1240, 2, 24, 2, '#d5f2dd');
    out += rect(1172, 12, 126, 1, '#dbe4fb') + rect(1212, 1, 2, 17, '#c3cf37');
    for (x = 1306; x < 1670; x += 26) {
        var top = 4 + x % 4;
        out += rect(x, top + 2, 8, 1, green) + rect(x + 7, top, 12, 1, green) + rect(x + 18, top + 2, 10, 1, x % 3 ? green : blue);
        out += rect(x + 2, 9, 6, 1, blue) + rect(x + 11, 8, 9, 1, blue) + rect(x, 12 + x % 2, 26, 1, blue);
    }
    out += rect(1674, 5, 12, 6, blue) + rect(1686, 2, 12, 2, blue) + rect(1698, 4, 20, 1, blue) + rect(1674, 11, 44, 1, blue);
    flags.forEach(function(f, i) {
        out += `<path d="M${f} 0h6l-6 5z" fill="${i ? '#eaae72' : '#ffffff'}"/>`;
    });
    document.getElementById('overview').innerHTML = out;
}

drawGrid();
drawNotes();
drawRuler();
drawVelocity();
drawOverview();
```
